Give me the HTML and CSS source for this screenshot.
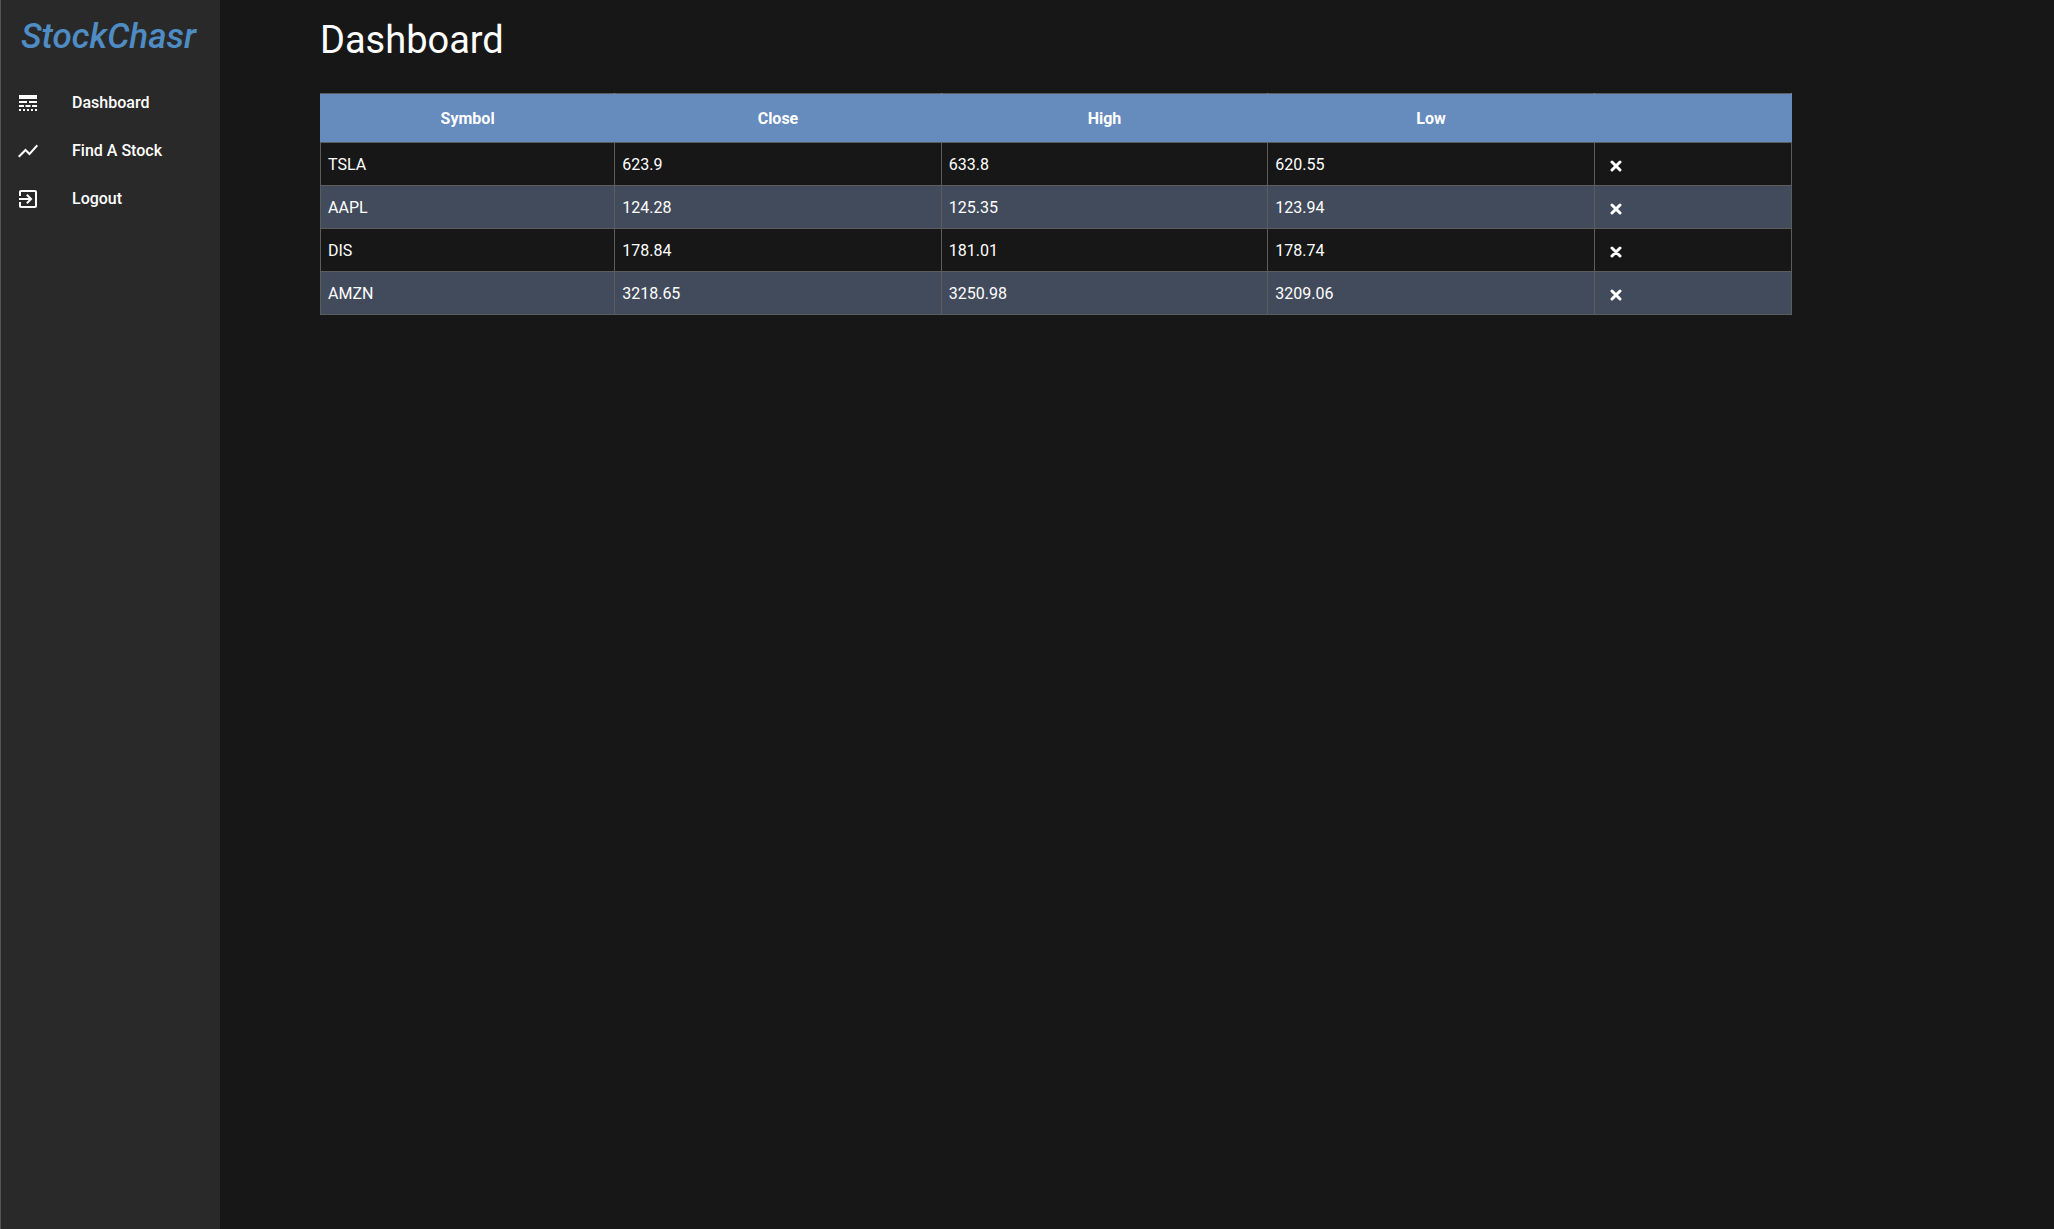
FILE: index.html
```html
<!DOCTYPE html>
<html lang="en">
<head>
<meta charset="utf-8">
<meta name="viewport" content="width=device-width, initial-scale=1">
<title>StockChasr</title>
<link rel="stylesheet" href="styles.css">
</head>
<body>
<div class="app">
  <aside class="sidebar">
    <div class="logo">StockChasr</div>
    <nav class="nav">
      <a class="nav-link" href="#dashboard">
        <svg class="icon" viewBox="0 0 24 24" aria-hidden="true"><path d="M3 16h5v-2H3v2zm6.500 0h5v-2h-5v2zm6.500 0h5v-2h-5v2zM3 20h2v-2H3v2zm4 0h2v-2H7v2zm4 0h2v-2h-2v2zm4 0h2v-2h-2v2zm4 0h2v-2h-2v2zM3 12h8v-2H3v2zm10 0h8v-2h-8v2zM3 4v4h18V4H3z"/></svg>
        <span>Dashboard</span>
      </a>
      <a class="nav-link" href="#find">
        <svg class="icon" viewBox="0 0 24 24" aria-hidden="true"><path d="M3.500 18.490l6-6.010 4 4L22 6.920l-1.410-1.410-7.090 7.970-4-4L2 16.990z"/></svg>
        <span>Find A Stock</span>
      </a>
      <a class="nav-link" href="#logout">
        <svg class="icon" viewBox="0 0 24 24" aria-hidden="true"><path d="M10.090 15.590L11.500 17l5-5-5-5-1.410 1.410L12.670 11H3v2h9.670l-2.580 2.590zM19 3H5c-1.110 0-2 .9-2 2v4h2V5h14v14H5v-4H3v4c0 1.100.89 2 2 2h14c1.100 0 2-.9 2-2V5c0-1.100-.9-2-2-2z"/></svg>
        <span>Logout</span>
      </a>
    </nav>
  </aside>
  <main class="main">
    <h1 class="title">Dashboard</h1>
    <table class="stocks">
      <colgroup><col class="col-symbol"><col class="col-price"><col class="col-price"><col class="col-price"><col></colgroup>
      <thead>
        <tr><th scope="col">Symbol</th><th scope="col">Close</th><th scope="col">High</th><th scope="col">Low</th><th></th></tr>
      </thead>
      <tbody>
        <tr><td>TSLA</td><td>623.9</td><td>633.8</td><td>620.55</td><td><button class="remove" type="button" aria-label="Remove TSLA"><svg class="cross" viewBox="0 0 12 12"><path d="M2 2l8 8M10 2l-8 8"/></svg></button></td></tr>
        <tr><td>AAPL</td><td>124.28</td><td>125.35</td><td>123.94</td><td><button class="remove" type="button" aria-label="Remove AAPL"><svg class="cross" viewBox="0 0 12 12"><path d="M2 2l8 8M10 2l-8 8"/></svg></button></td></tr>
        <tr><td>DIS</td><td>178.84</td><td>181.01</td><td>178.74</td><td><button class="remove" type="button" aria-label="Remove DIS"><svg class="cross" viewBox="0 0 12 12"><path d="M2 2l8 8M10 2l-8 8"/></svg></button></td></tr>
        <tr><td>AMZN</td><td>3218.65</td><td>3250.98</td><td>3209.06</td><td><button class="remove" type="button" aria-label="Remove AMZN"><svg class="cross" viewBox="0 0 12 12"><path d="M2 2l8 8M10 2l-8 8"/></svg></button></td></tr>
      </tbody>
    </table>
  </main>
</div>
</body>
</html>
```
FILE: styles.css
```css
* { box-sizing: border-box; }

body {
  margin: 0;
  background: #171717;
  color: #fff;
  font: 16px/24px Roboto, sans-serif;
}

.app {
  display: flex;
  min-height: 100vh;
}

.sidebar {
  flex: 0 0 220px;
  background: #292929;
  border-left: 1px solid #555;
}

.logo {
  padding: 13px 0 0 20px;
  color: #4f8cc4;
  font-size: 35px;
  font-style: italic;
  font-weight: 500;
  line-height: 48px;
}

.nav {
  display: flex;
  flex-direction: column;
  padding-top: 18px;
}

.nav-link {
  display: flex;
  align-items: center;
  gap: 32px;
  height: 48px;
  padding: 0 15px;
  color: #fff;
  font-weight: 500;
  text-decoration: none;
}

.icon {
  width: 24px;
  height: 24px;
  fill: currentColor;
}

.main {
  flex: 1;
  min-width: 0;
  padding: 10px 262px 0 100px;
}

.title {
  margin: 0 0 23px;
  font-size: 38px;
  font-weight: 400;
  line-height: 60px;
}

.stocks {
  width: 100%;
  table-layout: fixed;
  border-collapse: collapse;
}

.col-symbol { width: 20%; }
.col-price { width: 22.2%; }

.stocks th,
.stocks td {
  padding: 2px 7px 0;
  border: 1px solid #5c5c5c;
}

.stocks th {
  height: 49px;
  background: #668bbd;
  border-left-color: #668bbd;
  border-right-color: #668bbd;
  font-weight: 700;
}

.stocks td {
  height: 43px;
  font-weight: 400;
}

.stocks tbody tr:nth-child(even) { background: #424b5c; }

.remove {
  display: flex;
  padding: 2px 8px 0;
  border: 0;
  background: none;
  color: inherit;
}

.cross {
  width: 12px;
  height: 12px;
  fill: none;
  stroke: currentColor;
  stroke-width: 3;
  stroke-linecap: round;
}
```
